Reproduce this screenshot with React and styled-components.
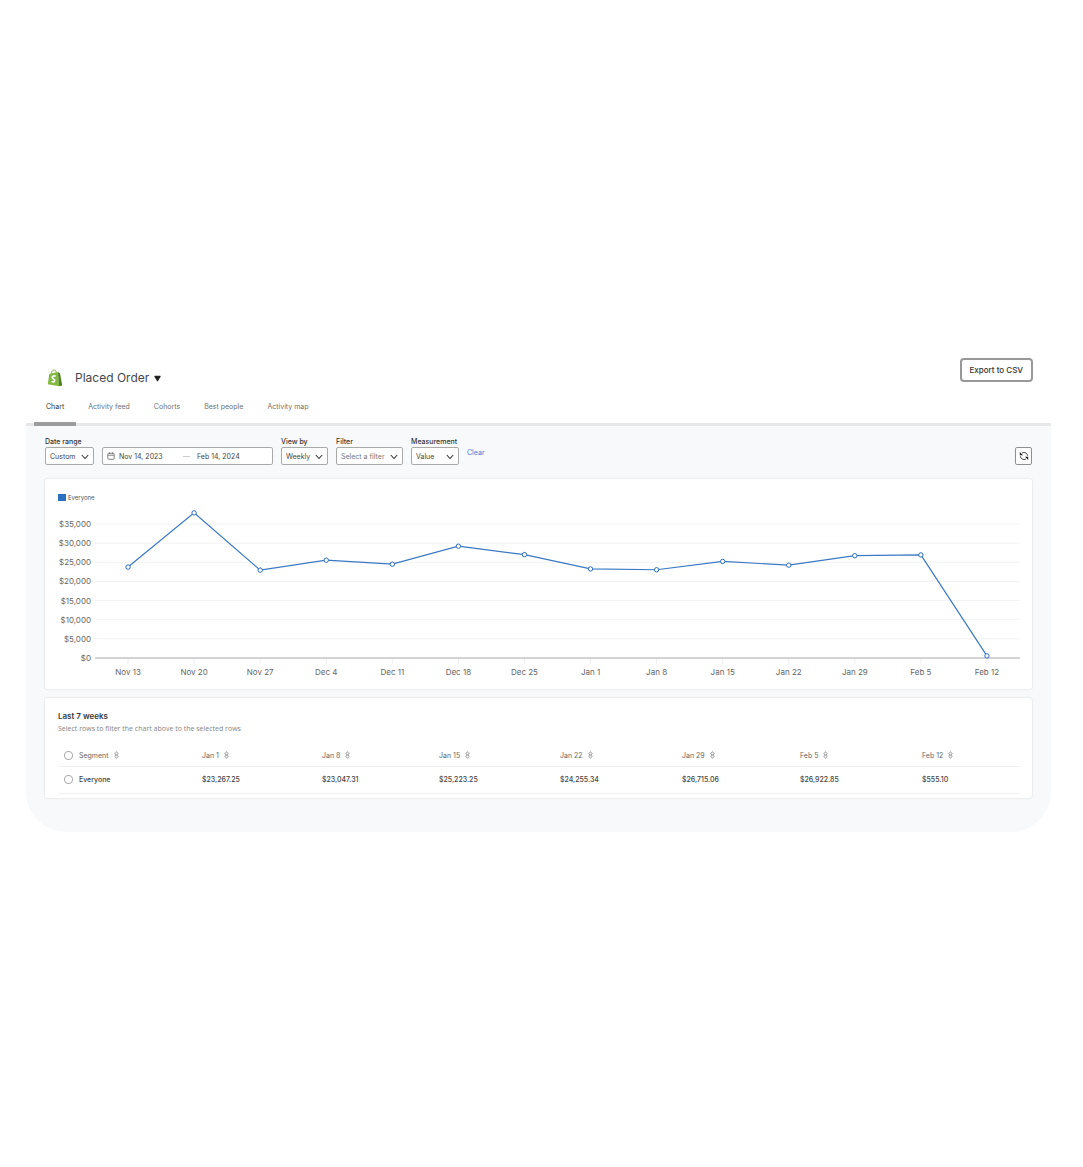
import React, { useState } from "react";
import styled, { createGlobalStyle } from "styled-components";

const GlobalStyle = createGlobalStyle`
  body {
    margin: 0;
    background: #fff;
    font-family: Inter, "Liberation Sans", sans-serif;
    color: #33383d;
  }

  *, *::before, *::after {
    box-sizing: border-box;
  }

  button, input, select {
    font-family: inherit;
    color: inherit;
  }
`;

const Page = styled.main`
  padding: 350px 32px 40px 26px;
`;

const Panel = styled.section`
  overflow: hidden;
  background: #f8f9fb;
  border-radius: 0 0 40px 40px;
`;

const Header = styled.header`
  background: #fff;
  border-bottom: 3px solid #e7e7e7;
`;

const TitleRow = styled.div`
  display: flex;
  justify-content: space-between;
  align-items: flex-start;
  padding: 8px 18px 0 21px;
`;

const TitleGroup = styled.div`
  display: flex;
  align-items: center;
  padding-top: 10px;
`;

const MetricButton = styled.button`
  display: flex;
  align-items: center;
  gap: 5px;
  margin-left: 12px;
  padding: 0;
  border: 0;
  background: none;
`;

const Title = styled.h1`
  margin: 0;
  font-size: 12px;
  font-weight: 400;
  line-height: 20px;
  color: #44484d;
`;

const ExportButton = styled.button`
  height: 24px;
  padding: 0 8px;
  border: 2px solid #989898;
  border-radius: 4px;
  background: #fff;
  font-size: 8px;
  font-weight: 500;
  color: #333;
`;

const Tabs = styled.nav`
  display: flex;
  padding-left: 8px;
  margin: 8px 0 -3px;
`;

const Tab = styled.a`
  height: 30px;
  padding: 0 12px;
  border-bottom: 4px solid ${(props) => (props.$active ? "#9d9d9d" : "transparent")};
  font-size: 7px;
  line-height: 22px;
  color: ${(props) => (props.$active ? "#333" : "#707070")};
  text-decoration: none;
`;

const Content = styled.div`
  padding: 11px 19px 34px 19px;
`;

const Filters = styled.form`
  display: flex;
  align-items: flex-end;
  gap: 8px;
  margin-bottom: 14px;
`;

const Field = styled.div`
  display: flex;
  flex-direction: column;
`;

const Label = styled.label`
  font-size: 7px;
  font-weight: 500;
  line-height: 10px;
  color: #333;
`;

const SelectWrap = styled.div`
  position: relative;
  width: ${(props) => props.$width}px;

  svg {
    position: absolute;
    top: 7px;
    right: 5px;
    pointer-events: none;
  }
`;

const Select = styled.select`
  display: block;
  appearance: none;
  width: 100%;
  height: 18px;
  padding: 0 4px;
  border: 1px solid #a9a9a9;
  border-radius: 2px;
  background: #fff;
  font-size: 7px;
  color: ${(props) => (props.$muted ? "#777" : "#444")};
`;

const DateRange = styled.div`
  display: flex;
  align-items: center;
  width: 171px;
  height: 18px;
  padding: 0 4px;
  border: 1px solid #a9a9a9;
  border-radius: 2px;
  background: #fff;
`;

const DateInput = styled.input`
  width: 60px;
  margin-left: 4px;
  padding: 0;
  border: 0;
  background: none;
  font-size: 7px;
  color: #444;
`;

const Dash = styled.span`
  width: 7px;
  height: 1px;
  margin: 0 3px 0 4px;
  background: #ccc;
`;

const ClearLink = styled.a`
  align-self: center;
  padding-top: 4px;
  font-size: 7px;
  line-height: 12px;
  color: #3b7dd0;
  text-decoration: none;
`;

const RefreshButton = styled.button`
  display: flex;
  align-items: center;
  justify-content: center;
  width: 17px;
  height: 18px;
  margin-left: auto;
  padding: 0;
  border: 1px solid #8f8f8f;
  border-radius: 2px;
  background: #fff;
`;

const Card = styled.section`
  padding: 12px 12px 12px 13px;
  margin-bottom: 9px;
  border-radius: 2px;
  background: #fff;
  box-shadow: 0 0 2px rgba(0, 0, 0, 0.18);

  &:last-child {
    padding-bottom: 4px;
    margin-bottom: 0;
  }
`;

const Legend = styled.div`
  display: flex;
  align-items: center;
  gap: 2px;
  height: 12px;
  font-size: 6px;
  color: #555;
`;

const Swatch = styled.span`
  width: 8px;
  height: 7px;
  background: #2a6fc0;
`;

const Chart = styled.svg`
  display: block;
  width: 100%;
  height: auto;

  text {
    font-size: 8px;
    fill: #666;
  }
`;

const CardTitle = styled.h2`
  margin: 0;
  font-size: 8px;
  font-weight: 600;
  line-height: 12px;
`;

const Hint = styled.p`
  margin: 2px 0 11px;
  font-family: "Open Sans", sans-serif;
  font-size: 7px;
  line-height: 10px;
  color: #858585;
`;

const Table = styled.table`
  width: 100%;
  table-layout: fixed;
  border-collapse: collapse;
`;

const Th = styled.th`
  height: 21px;
  padding: 0;
  border-bottom: 1px solid #f0f0f0;
  text-align: left;
`;

const Td = styled.td`
  height: 27px;
  padding: 0;
  border-bottom: 1px solid #f0f0f0;
  font-size: 7px;
  font-weight: 500;
  color: #444;
`;

const SortButton = styled.button`
  display: flex;
  align-items: center;
  gap: 5px;
  padding: 0;
  border: 0;
  background: none;
  font-size: 7px;
  color: #666;
`;

const Checkbox = styled.input`
  display: block;
  appearance: none;
  width: 9px;
  height: 9px;
  margin: 0 0 0 6px;
  border: 1px solid #aaa;
  border-radius: 4px;
  background: #fff;

  &:checked {
    background: #2a6fc0;
  }
`;

const points = [
  { label: "Nov 13", value: 23750 },
  { label: "Nov 20", value: 37900 },
  { label: "Nov 27", value: 22950 },
  { label: "Dec 4", value: 25550 },
  { label: "Dec 11", value: 24500 },
  { label: "Dec 18", value: 29200 },
  { label: "Dec 25", value: 27000 },
  { label: "Jan 1", value: 23267.25 },
  { label: "Jan 8", value: 23047.31 },
  { label: "Jan 15", value: 25223.25 },
  { label: "Jan 22", value: 24255.34 },
  { label: "Jan 29", value: 26715.06 },
  { label: "Feb 5", value: 26922.85 },
  { label: "Feb 12", value: 555.1 },
];

const ticks = [0, 5000, 10000, 15000, 20000, 25000, 30000, 35000];
const tabs = ["Chart", "Activity feed", "Cohorts", "Best people", "Activity map"];
const columnWidths = [21, 123, 120, 117, 121, 122, 118, 122, 98];

const money = (value) =>
  "$" + value.toLocaleString("en-US", { minimumFractionDigits: 2 });

const ShopifyLogo = () => (
  <svg width="16" height="18" viewBox="0 0 16 18" aria-hidden="true">
    <path
      d="M4 5C4.300 2.500 6 .8 7.400 1c1.300.1 1.800 1.500 1.900 3.200"
      fill="none"
      stroke="#7fae3a"
      strokeWidth="1"
    />
    <path d="M2.300 4.900 10.800 2.900 12.200 17.300.8 15.300z" fill="#83b940" />
    <path d="M10.800 2.900 13 4.300 15.200 16.500 12.200 17.300z" fill="#4f8127" />
    <path
      d="M8.600 7.200C7.400 6.600 5.300 6.700 5.200 8.300c-.1 1.800 2.700 1.700 2.500 3.400-.1 1.400-1.800 1.500-3.100.6"
      fill="none"
      stroke="#fff"
      strokeWidth="1.600"
    />
  </svg>
);

const Chevron = () => (
  <svg width="8" height="6" viewBox="0 0 8 6" aria-hidden="true">
    <path d="M.8 1 4 4.500 7.200 1" fill="none" stroke="#333" strokeWidth="1.100" />
  </svg>
);

const CalendarIcon = () => (
  <svg width="8" height="8" viewBox="0 0 8 8" aria-hidden="true">
    <rect x=".8" y="1.300" width="6.400" height="6" rx="1" fill="none" stroke="#666" strokeWidth=".8" />
    <path d="M.8 3.200h6.400M2.500.3v1.500M5.500.3v1.500" stroke="#666" strokeWidth=".8" />
  </svg>
);

const RefreshIcon = () => (
  <svg width="10" height="10" viewBox="0 0 10 10" aria-hidden="true">
    <path
      d="M3.200 1.900C5.500.8 8.200 2 8.500 4.700M6.800 8.100C4.500 9.200 1.800 8 1.500 5.300"
      fill="none"
      stroke="#333"
      strokeWidth="1"
    />
    <path d="M.8 1v3.200H4zM9.200 9V5.800H6z" fill="#222" />
  </svg>
);

const SortIcon = () => (
  <svg width="5" height="8" viewBox="0 0 5 8" aria-hidden="true">
    <path
      d="M.7 2.800 2.500.6 4.300 2.800 2.500 4zM.7 5.200 2.500 7.400 4.300 5.200 2.500 4z"
      fill="none"
      stroke="#888"
      strokeWidth=".8"
    />
  </svg>
);

const SelectField = ({ id, label, value, width, muted }) => (
  <Field>
    <Label htmlFor={id}>{label}</Label>
    <SelectWrap $width={width}>
      <Select id={id} $muted={muted}>
        <option>{value}</option>
      </Select>
      <Chevron />
    </SelectWrap>
  </Field>
);

const LineChart = () => {
  const left = 37;
  const right = 962;
  const base = 155;
  const band = (right - left) / points.length;
  const x = (index) => left + band * (index + 0.5);
  const y = (value) => base - (value / 35000) * 134;

  return (
    <Chart viewBox="0 0 962 174" role="img" aria-label="Placed Order value by week">
      {ticks.map((tick) => (
        <g key={tick}>
          <line
            x1={left}
            x2={right}
            y1={y(tick)}
            y2={y(tick)}
            stroke={tick === 0 ? "#c4c5c9" : "#f1f2f3"}
            strokeWidth={tick === 0 ? 1.5 : 1}
          />
          <text x="33" y={y(tick) + 3} textAnchor="end">
            ${tick.toLocaleString("en-US")}
          </text>
        </g>
      ))}
      {points.map((point, index) => (
        <g key={point.label}>
          <line x1={x(index)} x2={x(index)} y1={base + 1} y2={base + 6} stroke="#eceef1" />
          <text x={x(index)} y={base + 17} textAnchor="middle">
            {point.label}
          </text>
        </g>
      ))}
      <polyline
        points={points.map((point, index) => `${x(index)},${y(point.value)}`).join(" ")}
        fill="none"
        stroke="#3a78c3"
        strokeWidth="1.200"
      />
      {points.map((point, index) => (
        <circle
          key={point.label}
          cx={x(index)}
          cy={y(point.value)}
          r="2.200"
          fill="#fff"
          stroke="#2a6fc0"
          strokeWidth="1"
        />
      ))}
    </Chart>
  );
};

const App = () => {
  const [selected, setSelected] = useState(false);
  const toggle = () => setSelected(!selected);
  const weeks = points.slice(-7);

  return (
    <Page>
      <GlobalStyle />
      <Panel>
        <Header>
          <TitleRow>
            <TitleGroup>
              <ShopifyLogo />
              <MetricButton type="button">
                <Title>Placed Order</Title>
                <svg width="7" height="7" viewBox="0 0 7 7" aria-hidden="true">
                  <path d="M1 .7h5q1 0 .6 1L4 6.100q-.5.7-1 0L.4 1.700Q0 .7 1 .7z" fill="#222" />
                </svg>
              </MetricButton>
            </TitleGroup>
            <ExportButton type="button">Export to CSV</ExportButton>
          </TitleRow>
          <Tabs>
            {tabs.map((tab, index) => (
              <Tab key={tab} href="#" $active={index === 0}>
                {tab}
              </Tab>
            ))}
          </Tabs>
        </Header>

        <Content>
          <Filters>
            <SelectField id="range" label="Date range" value="Custom" width={49} />
            <DateRange>
              <CalendarIcon />
              <DateInput aria-label="Start date" defaultValue="Nov 14, 2023" />
              <Dash />
              <DateInput aria-label="End date" defaultValue="Feb 14, 2024" />
            </DateRange>
            <SelectField id="view" label="View by" value="Weekly" width={47} />
            <SelectField id="filter" label="Filter" value="Select a filter" width={67} muted />
            <SelectField id="measure" label="Measurement" value="Value" width={48} />
            <ClearLink href="#">Clear</ClearLink>
            <RefreshButton type="button" aria-label="Refresh">
              <RefreshIcon />
            </RefreshButton>
          </Filters>

          <Card>
            <Legend>
              <Swatch />
              Everyone
            </Legend>
            <LineChart />
          </Card>

          <Card>
            <CardTitle>Last 7 weeks</CardTitle>
            <Hint>Select rows to filter the chart above to the selected rows</Hint>
            <Table>
              <colgroup>
                {columnWidths.map((width, index) => (
                  <col key={index} width={width} />
                ))}
              </colgroup>
              <thead>
                <tr>
                  <Th>
                    <Checkbox type="checkbox" aria-label="Select all" checked={selected} onChange={toggle} />
                  </Th>
                  {["Segment", ...weeks.map((week) => week.label)].map((name) => (
                    <Th key={name}>
                      <SortButton type="button">
                        {name}
                        <SortIcon />
                      </SortButton>
                    </Th>
                  ))}
                </tr>
              </thead>
              <tbody>
                <tr>
                  <Td>
                    <Checkbox type="checkbox" aria-label="Everyone" checked={selected} onChange={toggle} />
                  </Td>
                  <Td>Everyone</Td>
                  {weeks.map((week) => (
                    <Td key={week.label}>{money(week.value)}</Td>
                  ))}
                </tr>
              </tbody>
            </Table>
          </Card>
        </Content>
      </Panel>
    </Page>
  );
};

export default App;
